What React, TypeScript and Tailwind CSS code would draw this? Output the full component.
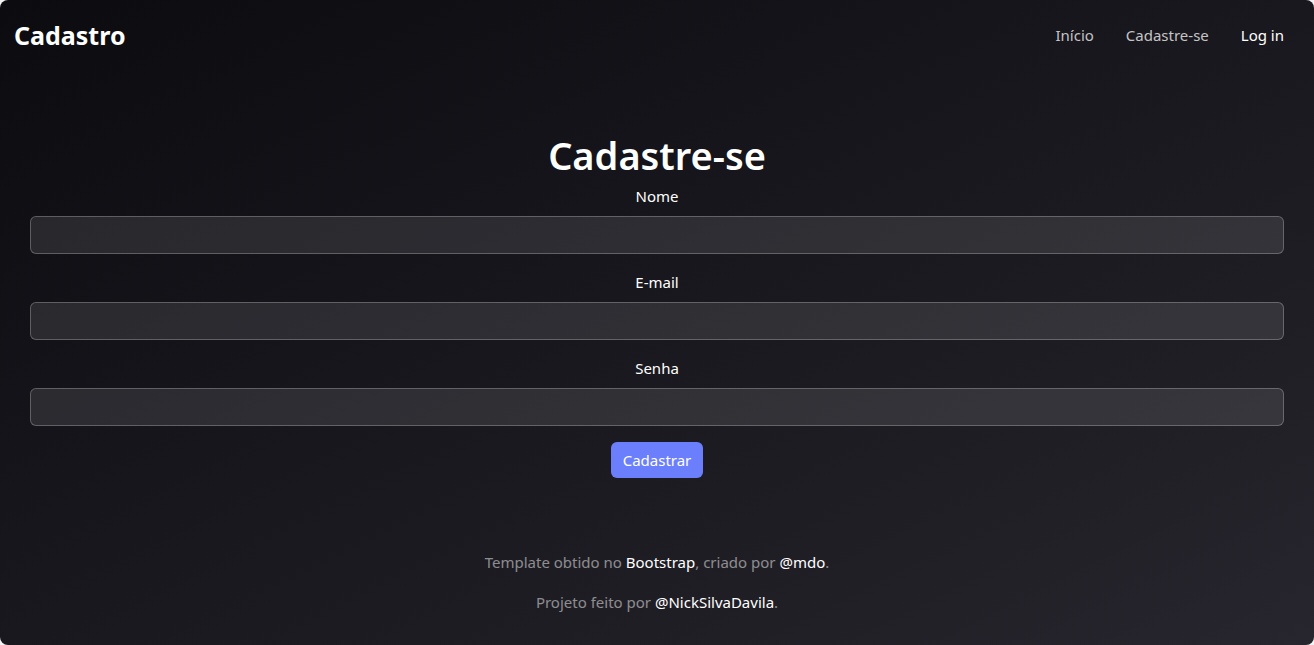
import { FormEvent } from 'react';

const fields = [
  { id: 'nome', label: 'Nome', type: 'text' },
  { id: 'email', label: 'E-mail', type: 'email' },
  { id: 'senha', label: 'Senha', type: 'password' },
];

const App = () => {
  const handleSubmit = (event: FormEvent) => event.preventDefault();

  return (
    <div className="h-[645px] w-[1314px] overflow-hidden bg-[#f3f3f3] font-['Noto_Sans',sans-serif]">
      <div className="flex h-full flex-col rounded-lg bg-gradient-to-br from-[#0c0b10] via-[#19181e] to-[#27252d] text-white">
        <header className="flex items-center justify-between px-[14px] pt-[16px]">
          <h3 className="text-[25px] font-bold leading-[38px]">Cadastro</h3>
          <nav className="flex items-center gap-8 pr-4 text-[15px]">
            <a className="text-white/75">Início</a>
            <a className="text-white/75">Cadastre-se</a>
            <a className="text-white">Log in</a>
          </nav>
        </header>

        <main className="mt-[77px] flex flex-col items-center px-[30px]">
          <h1 className="mb-[5px] text-[38px] font-semibold leading-[48px]">Cadastre-se</h1>
          <form onSubmit={handleSubmit} className="flex w-full flex-col items-center">
            {fields.map((field) => (
              <div key={field.id} className="mb-4 flex w-full flex-col items-center">
                <label htmlFor={field.id} className="mb-2 text-[15px] leading-6">{field.label}</label>
                <input id={field.id} type={field.type} className="h-[38px] w-full rounded-md border border-white/25 bg-white/10 px-3 text-white outline-none" />
              </div>
            ))}
            <button type="submit" className="h-[36px] rounded-md bg-[#6b7ffd] px-3 text-[15px] text-white">Cadastrar</button>
          </form>
        </main>

        <footer className="mt-[72px] flex flex-col items-center gap-4 text-[15px] leading-6 text-white/50">
          <p>Template obtido no <a className="text-white">Bootstrap</a>, criado por <a className="text-white">@mdo</a>.</p>
          <p>Projeto feito por <a className="text-white">@NickSilvaDavila</a>.</p>
        </footer>
      </div>
    </div>
  );
};

export default App;
